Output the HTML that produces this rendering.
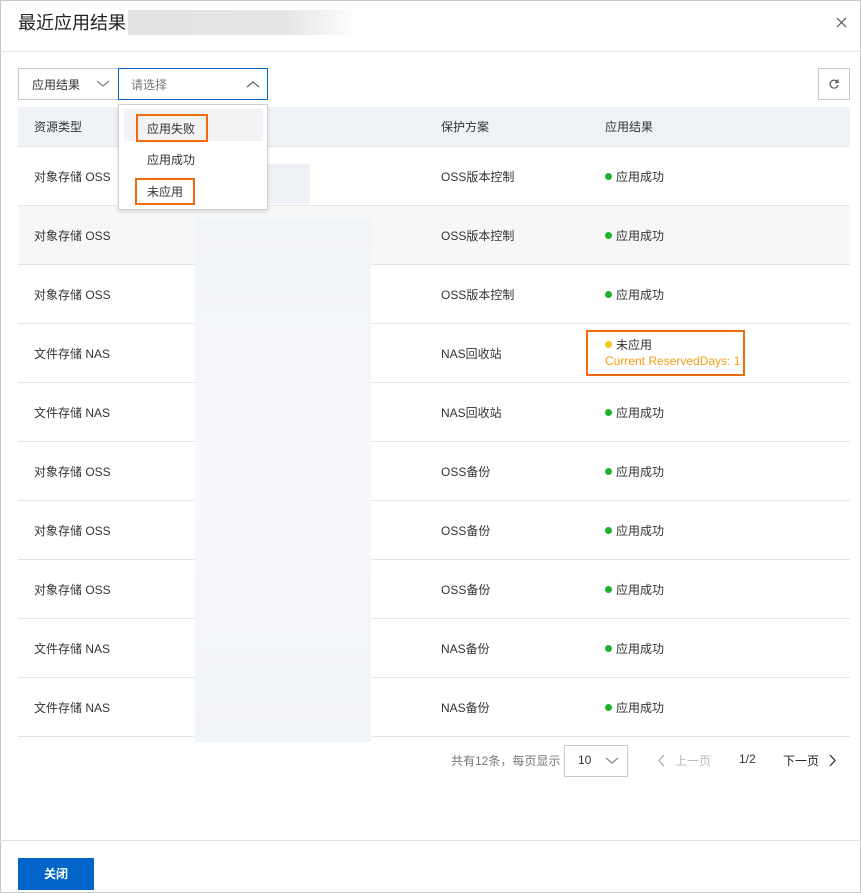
<!DOCTYPE html>
<html><head><meta charset="utf-8"><style>
*{box-sizing:border-box;margin:0;padding:0}
body{width:861px;height:893px;background:#fff;font-family:"Liberation Sans","Noto Sans CJK SC",sans-serif;font-size:12px;color:#333;position:relative;overflow:hidden}
.frame{position:absolute;left:0;top:0;width:861px;height:893px;border:1px solid #c8c8c8}
.abs{position:absolute}
.row{position:absolute;left:18px;width:832px;height:59px;border-bottom:1px solid #e5e5e5}
.row span{position:absolute;top:21px;white-space:nowrap}
.dot{display:inline-block;width:7px;height:7px;border-radius:50%;background:#1eb02f;margin-right:4px;vertical-align:1px}
</style></head><body>
<div class="frame"></div>
<div class="abs" style="left:18px;top:9px;font-size:18px;color:#222">最近应用结果</div>
<div class="abs" style="left:128px;top:10px;width:230px;height:25px;background:linear-gradient(90deg,#e2e2e2,#e6e6e6 70%,#fff)"></div>
<svg class="abs" style="left:836px;top:17px" width="11" height="11"><path d="M1 1l9 9M10 1l-9 9" stroke="#555" stroke-width="1.2"/></svg>
<div class="abs" style="left:0;top:51px;width:861px;height:1px;background:#e3e3e3"></div>

<div class="abs" style="left:18px;top:68px;width:101px;height:32px;border:1px solid #c8c8c8;border-right:none"><span class="abs" style="left:13px;top:7px">应用结果</span>
<svg class="abs" style="left:77px;top:10px" width="14" height="10"><path d="M1 2l6 5 6-5" stroke="#888" fill="none" stroke-width="1.3"/></svg></div>
<div class="abs" style="left:118px;top:68px;width:150px;height:32px;border:1px solid #0064c8"><span class="abs" style="left:12px;top:7px;color:#777">请选择</span>
<svg class="abs" style="left:127px;top:10px" width="14" height="10"><path d="M1 8l6-5 6 5" stroke="#666" fill="none" stroke-width="1.3"/></svg></div>
<div class="abs" style="left:818px;top:68px;width:32px;height:32px;border:1px solid #c8c8c8"><svg class="abs" style="left:9px;top:9px" width="12" height="12"><path d="M9.5 4A4 4 0 1 0 10 7" stroke="#555" fill="none" stroke-width="1.2"/><path d="M10 1.5v3h-3" stroke="#555" fill="none" stroke-width="1.2"/></svg></div>

<div class="abs" style="left:18px;top:107px;width:832px;height:40px;background:#eff2f6;border-bottom:1px solid #e5e5e5">
<span class="abs" style="left:16px;top:11px">资源类型</span><span class="abs" style="left:423px;top:11px">保护方案</span><span class="abs" style="left:587px;top:11px">应用结果</span></div>

<div class="row" style="top:147px"><span style="left:16px">对象存储 OSS</span><span style="left:423px">OSS版本控制</span><span style="left:587px"><i class="dot"></i>应用成功</span></div>
<div class="row" style="top:206px;background:#f7f7f7"><span style="left:16px">对象存储 OSS</span><span style="left:423px">OSS版本控制</span><span style="left:587px"><i class="dot"></i>应用成功</span></div>
<div class="row" style="top:265px"><span style="left:16px">对象存储 OSS</span><span style="left:423px">OSS版本控制</span><span style="left:587px"><i class="dot"></i>应用成功</span></div>
<div class="row" style="top:324px"><span style="left:16px">文件存储 NAS</span><span style="left:423px">NAS回收站</span>
<span style="left:587px;top:12px"><i class="dot" style="background:#f5c518"></i>未应用</span><span style="left:587px;top:30px;color:#f39c12">Current ReservedDays: 1</span></div>
<div class="abs" style="left:586px;top:330px;width:159px;height:46px;border:2px solid #f06a0f"></div>
<div class="row" style="top:383px"><span style="left:16px">文件存储 NAS</span><span style="left:423px">NAS回收站</span><span style="left:587px"><i class="dot"></i>应用成功</span></div>
<div class="row" style="top:442px"><span style="left:16px">对象存储 OSS</span><span style="left:423px">OSS备份</span><span style="left:587px"><i class="dot"></i>应用成功</span></div>
<div class="row" style="top:501px"><span style="left:16px">对象存储 OSS</span><span style="left:423px">OSS备份</span><span style="left:587px"><i class="dot"></i>应用成功</span></div>
<div class="row" style="top:560px"><span style="left:16px">对象存储 OSS</span><span style="left:423px">OSS备份</span><span style="left:587px"><i class="dot"></i>应用成功</span></div>
<div class="row" style="top:619px"><span style="left:16px">文件存储 NAS</span><span style="left:423px">NAS备份</span><span style="left:587px"><i class="dot"></i>应用成功</span></div>
<div class="row" style="top:678px"><span style="left:16px">文件存储 NAS</span><span style="left:423px">NAS备份</span><span style="left:587px"><i class="dot"></i>应用成功</span></div>

<div class="abs" style="left:268px;top:164px;width:42px;height:40px;background:#eef1f6"></div>
<div class="abs" style="left:195px;top:218px;width:176px;height:524px;background:linear-gradient(180deg,#f1f4f9,#f7f8fb 50%,#f1f4f9)"></div>

<div class="abs" style="left:118px;top:104px;width:150px;height:106px;background:#fff;border:1px solid #d0d0d0;box-shadow:0 2px 4px rgba(0,0,0,.12)">
<div class="abs" style="left:5px;top:4px;width:139px;height:32px;background:#f2f3f5"></div>
<span class="abs" style="left:28px;top:15px">应用失败</span>
<span class="abs" style="left:28px;top:46px">应用成功</span>
<span class="abs" style="left:28px;top:78px">未应用</span></div>
<div class="abs" style="left:136px;top:114px;width:72px;height:28px;border:2px solid #f06a0f"></div>
<div class="abs" style="left:135px;top:178px;width:60px;height:27px;border:2px solid #f06a0f"></div>

<span class="abs" style="left:451px;top:752px;color:#777">共有12条，每页显示</span>
<div class="abs" style="left:564px;top:745px;width:64px;height:32px;border:1px solid #c8c8c8"><span class="abs" style="left:13px;top:7px">10</span>
<svg class="abs" style="left:40px;top:10px" width="14" height="10"><path d="M1 2l6 5 6-5" stroke="#888" fill="none" stroke-width="1.3"/></svg></div>
<svg class="abs" style="left:657px;top:754px" width="8" height="13"><path d="M7 1L2 6.5 7 12" stroke="#aaa" fill="none" stroke-width="1.3"/></svg>
<span class="abs" style="left:675px;top:752px;color:#bbb">上一页</span>
<span class="abs" style="left:739px;top:752px;color:#333">1/2</span>
<span class="abs" style="left:783px;top:752px;color:#222">下一页</span>
<svg class="abs" style="left:829px;top:754px" width="8" height="13"><path d="M1 1l5 5.5L1 12" stroke="#333" fill="none" stroke-width="1.3"/></svg>

<div class="abs" style="left:0;top:840px;width:861px;height:1px;background:#e3e3e3"></div>
<div class="abs" style="left:18px;top:858px;width:76px;height:32px;background:#0064c8;color:#fff;font-weight:bold;text-align:center;line-height:32px">关闭</div>
</body></html>
